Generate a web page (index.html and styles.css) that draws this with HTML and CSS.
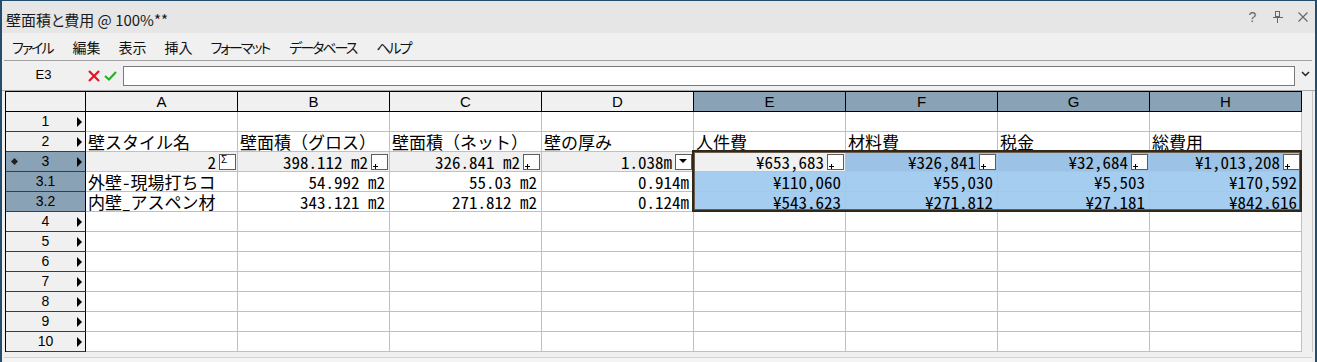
FILE: index.html
```html
<!DOCTYPE html>
<html lang="ja">
<head>
    <meta charset="UTF-8">
    <title>壁面積と費用 @ 100%**</title>
    <link rel="stylesheet" href="styles.css">
</head>
<body>
<div class="window">
    <!-- タイトルバー -->
    <div class="titlebar">
        <span class="title">壁面積と費用 @ 100%**</span>
        <div class="title-buttons">
            <span class="tbtn">?</span>
            <span class="tbtn">
                <svg width="11" height="12" viewBox="0 0 11 12"><path d="M3.5 0.5h4v5h-4zM0.5 6.5h10M5.5 6.5v5" fill="none" stroke="#666" stroke-width="1" shape-rendering="crispEdges"/></svg>
            </span>
            <span class="tbtn">
                <svg width="10" height="10" viewBox="0 0 10 10"><path d="M0.5 0.5l9 9M9.5 0.5l-9 9" stroke="#666" stroke-width="1.1"/></svg>
            </span>
        </div>
    </div>

    <!-- メニュー -->
    <div class="menubar">
        <span class="menu-item kana">ファイル</span>
        <span class="menu-item">編集</span>
        <span class="menu-item">表示</span>
        <span class="menu-item">挿入</span>
        <span class="menu-item kana">フォーマット</span>
        <span class="menu-item kana">データベース</span>
        <span class="menu-item kana">ヘルプ</span>
    </div>
    <div class="separator"></div>

    <!-- 数式バー -->
    <div class="formulabar">
        <span class="cellref">E3</span>
        <svg class="cancel" width="12" height="12" viewBox="0 0 12 12"><path d="M1 1l10 10M11 1L1 11" stroke="#e81123" stroke-width="2.2"/></svg>
        <svg class="ok" width="13" height="10" viewBox="0 0 13 10"><path d="M1 5l4 3.5L12 1" fill="none" stroke="#22b022" stroke-width="2"/></svg>
        <div class="formula-input"></div>
        <span class="chev">
            <svg width="9" height="6" viewBox="0 0 9 6"><path d="M1 1l3.5 3.5L8 1" fill="none" stroke="#222" stroke-width="1.5"/></svg>
        </span>
    </div>

    <!-- シート -->
    <div class="sheet-area">
        <div class="pane">
            <div class="sheet">
                <div class="corner"></div>
                <div class="ch">A</div>
                <div class="ch">B</div>
                <div class="ch">C</div>
                <div class="ch">D</div>
                <div class="ch sel">E</div>
                <div class="ch sel">F</div>
                <div class="ch sel">G</div>
                <div class="ch sel">H</div>

                <!-- 1 -->
                <div class="rh"><span class="mark"></span><span class="num">1</span><span class="arrow"></span></div>
                <div class="c"></div><div class="c"></div><div class="c"></div><div class="c"></div>
                <div class="c"></div><div class="c"></div><div class="c"></div><div class="c"></div>

                <!-- 2 -->
                <div class="rh"><span class="mark"></span><span class="num">2</span><span class="arrow"></span></div>
                <div class="c l">壁スタイル名</div>
                <div class="c l">壁面積（グロス）</div>
                <div class="c l">壁面積（ネット）</div>
                <div class="c l">壁の厚み</div>
                <div class="c l">人件費</div>
                <div class="c l">材料費</div>
                <div class="c l">税金</div>
                <div class="c l">総費用</div>

                <!-- 3 -->
                <div class="rh sel"><span class="mark"><i class="diamond"></i></span><span class="num">3</span><span class="arrow"></span></div>
                <div class="c r sum">2<span class="box sigma">Σ</span></div>
                <div class="c r sum">398.112 m2<span class="box"><svg width="15" height="14" viewBox="0 0 15 14"><path d="M1 11.5h5M3.5 9v5" stroke="#000" stroke-width="1" shape-rendering="crispEdges"/></svg></span></div>
                <div class="c r sum">326.841 m2<span class="box"><svg width="15" height="14" viewBox="0 0 15 14"><path d="M1 11.5h5M3.5 9v5" stroke="#000" stroke-width="1" shape-rendering="crispEdges"/></svg></span></div>
                <div class="c r sum">1.038m<span class="box"><svg width="15" height="14" viewBox="0 0 15 14"><path d="M3 4h8l-4 4z" fill="#000"/></svg></span></div>
                <div class="c r sum">¥653,683<span class="box"><svg width="15" height="14" viewBox="0 0 15 14"><path d="M1 11.5h5M3.5 9v5" stroke="#000" stroke-width="1" shape-rendering="crispEdges"/></svg></span></div>
                <div class="c r hl-top">¥326,841<span class="box"><svg width="15" height="14" viewBox="0 0 15 14"><path d="M1 11.5h5M3.5 9v5" stroke="#000" stroke-width="1" shape-rendering="crispEdges"/></svg></span></div>
                <div class="c r hl-top">¥32,684<span class="box"><svg width="15" height="14" viewBox="0 0 15 14"><path d="M1 11.5h5M3.5 9v5" stroke="#000" stroke-width="1" shape-rendering="crispEdges"/></svg></span></div>
                <div class="c r hl-top">¥1,013,208<span class="box"><svg width="15" height="14" viewBox="0 0 15 14"><path d="M1 11.5h5M3.5 9v5" stroke="#000" stroke-width="1" shape-rendering="crispEdges"/></svg></span></div>

                <!-- 3.1 -->
                <div class="rh sel"><span class="mark"></span><span class="num">3.1</span><span></span></div>
                <div class="c l">外壁-現場打ちコ</div>
                <div class="c r">54.992 m2</div>
                <div class="c r">55.03 m2</div>
                <div class="c r">0.914m</div>
                <div class="c r hl">¥110,060</div>
                <div class="c r hl">¥55,030</div>
                <div class="c r hl">¥5,503</div>
                <div class="c r hl">¥170,592</div>

                <!-- 3.2 -->
                <div class="rh sel"><span class="mark"></span><span class="num">3.2</span><span></span></div>
                <div class="c l">内壁_アスペン材</div>
                <div class="c r">343.121 m2</div>
                <div class="c r">271.812 m2</div>
                <div class="c r">0.124m</div>
                <div class="c r hl">¥543,623</div>
                <div class="c r hl">¥271,812</div>
                <div class="c r hl">¥27,181</div>
                <div class="c r hl">¥842,616</div>

                <!-- 4 - 10 -->
                <div class="rh"><span class="mark"></span><span class="num">4</span><span class="arrow"></span></div>
                <div class="c"></div><div class="c"></div><div class="c"></div><div class="c"></div>
                <div class="c"></div><div class="c"></div><div class="c"></div><div class="c"></div>
                <div class="rh"><span class="mark"></span><span class="num">5</span><span class="arrow"></span></div>
                <div class="c"></div><div class="c"></div><div class="c"></div><div class="c"></div>
                <div class="c"></div><div class="c"></div><div class="c"></div><div class="c"></div>
                <div class="rh"><span class="mark"></span><span class="num">6</span><span class="arrow"></span></div>
                <div class="c"></div><div class="c"></div><div class="c"></div><div class="c"></div>
                <div class="c"></div><div class="c"></div><div class="c"></div><div class="c"></div>
                <div class="rh"><span class="mark"></span><span class="num">7</span><span class="arrow"></span></div>
                <div class="c"></div><div class="c"></div><div class="c"></div><div class="c"></div>
                <div class="c"></div><div class="c"></div><div class="c"></div><div class="c"></div>
                <div class="rh"><span class="mark"></span><span class="num">8</span><span class="arrow"></span></div>
                <div class="c"></div><div class="c"></div><div class="c"></div><div class="c"></div>
                <div class="c"></div><div class="c"></div><div class="c"></div><div class="c"></div>
                <div class="rh"><span class="mark"></span><span class="num">9</span><span class="arrow"></span></div>
                <div class="c"></div><div class="c"></div><div class="c"></div><div class="c"></div>
                <div class="c"></div><div class="c"></div><div class="c"></div><div class="c"></div>
                <div class="rh"><span class="mark"></span><span class="num">10</span><span class="arrow"></span></div>
                <div class="c"></div><div class="c"></div><div class="c"></div><div class="c"></div>
                <div class="c"></div><div class="c"></div><div class="c"></div><div class="c"></div>

                <!-- 選択範囲 E3:H3.2 -->
                <div class="selection"></div>
            </div>
            <div class="vscroll"></div>
        </div>
        <div class="hbar"></div>
    </div>
</div>
</body>
</html>
```

FILE: styles.css
```css
* {
    box-sizing: border-box;
}

body {
    margin: 0;
    background-color: #234d6e;
    font-family: "Noto Sans CJK JP", sans-serif;
    color: #000;
}

.window {
    width: 1317px;
    height: 362px;
    border-top: 1px solid #234d6e;
    border-left: 2px solid #234d6e;
    border-right: 2px solid #234d6e;
    background-color: #f0f0f0;
    overflow: hidden;
    display: flex;
    flex-direction: column;
}

/* タイトルバー */
.titlebar {
    height: 32px;
    flex: none;
    background-color: #e6e6e6;
    display: flex;
    align-items: center;
    padding: 4px 0 0 4px;
}

.title {
    flex: 1;
    font-size: 15px;
    color: #1a1a1a;
    font-feature-settings: "palt";
}

.title-buttons {
    display: flex;
    align-items: center;
    margin-top: -4px;
}

.tbtn {
    width: 25px;
    display: flex;
    justify-content: center;
    align-items: center;
    font-family: "Liberation Sans", sans-serif;
    font-size: 14px;
    color: #666;
}

/* メニュー */
.menubar {
    height: 27px;
    flex: none;
    display: flex;
    align-items: center;
    padding-left: 1px;
}

.menu-item {
    padding: 0 9px;
    font-size: 14px;
    color: #111;
}

.menu-item.kana {
    font-feature-settings: "palt";
    letter-spacing: -2px;
    padding-right: 11px;
}

.separator {
    height: 1px;
    flex: none;
    margin: 0 3px 0 2px;
    background-color: #a0a0a0;
}

/* 数式バー */
.formulabar {
    height: 29px;
    flex: none;
    display: flex;
    align-items: center;
}

.cellref {
    width: 83px;
    text-align: center;
    font-family: "Liberation Sans", sans-serif;
    font-size: 13px;
    margin-top: -3px;
}

.cancel {
    margin-left: 3px;
}

.ok {
    margin-left: 4px;
}

.formula-input {
    flex: 1;
    height: 20px;
    margin-left: 6px;
    background-color: #fff;
    border: 1px solid #7a7a7a;
}

.chev {
    width: 20px;
    display: flex;
    justify-content: center;
    margin-top: -4px;
}

/* シート */
.sheet-area {
    flex: 1;
    border-top: 1px solid #a8a8a8;
    display: flex;
    flex-direction: column;
}

.pane {
    display: flex;
    padding-left: 3px;
}

.sheet {
    position: relative;
    display: grid;
    grid-template-columns: 80px repeat(8, 152px);
    grid-auto-rows: 20px;
    border-left: 1px solid #000;
    border-top: 1px solid #000;
    background-color: #fff;
    font-family: "Noto Sans Mono CJK JP", "Noto Sans CJK JP", monospace;
}

.vscroll {
    flex: 1;
    margin-right: 2px;
    border-right: 1px solid #c8c8c8;
}

.hbar {
    margin: 5px 3px 0 2px;
    border-top: 1px solid #d4d4d4;
    height: 6px;
    background-color: #f4f4f4;
}

.corner,
.ch {
    background-color: #f0f0f0;
    border-right: 1px solid #000;
    border-bottom: 1px solid #000;
}

.ch {
    text-align: center;
    font-family: "Liberation Sans", sans-serif;
    font-size: 15px;
    line-height: 19px;
}

.ch.sel {
    background-color: #8aa2b6;
}

/* 行見出し */
.rh {
    display: grid;
    grid-template-columns: 12px 1fr 12px;
    align-items: center;
    background-color: #f0f0f0;
    border-right: 1px solid #000;
    border-bottom: 1px solid #3c3c3c;
    font-family: "Liberation Sans", sans-serif;
    font-size: 14px;
    line-height: 19px;
}

.rh.sel {
    background-color: #8aa2b6;
}

.rh .num {
    text-align: center;
}

.rh .mark {
    display: flex;
    justify-content: flex-end;
}

.rh .arrow {
    justify-self: end;
    margin-right: 3px;
    width: 0;
    height: 0;
    border-top: 5px solid transparent;
    border-bottom: 5px solid transparent;
    border-left: 5px solid #000;
}

.diamond {
    width: 5px;
    height: 5px;
    background-color: #222;
    transform: rotate(45deg);
    margin-right: 1px;
}

/* セル */
.c {
    display: flex;
    align-items: center;
    border-right: 1px solid #c0c0c0;
    border-bottom: 1px solid #c0c0c0;
    font-size: 17px;
    line-height: 19px;
    white-space: nowrap;
}

.c.l {
    padding-left: 2px;
}

.c.r {
    justify-content: flex-end;
    padding-right: 4px;
}

.c.sum {
    background-color: #f0f0f0;
    padding-right: 1px;
}

.c.hl-top {
    background-color: #9cc3e5;
    padding-right: 1px;
}

.c.hl {
    background-color: #a5cdf0;
}

.box {
    width: 17px;
    height: 16px;
    margin-left: 3px;
    flex: none;
    display: flex;
    border: 1px solid #5c5c5c;
    background-color: #fff;
}

.box.sigma {
    font-family: "Liberation Sans", sans-serif;
    font-size: 10px;
    line-height: 10px;
    padding-left: 1px;
}

.selection {
    position: absolute;
    left: 686px;
    top: 58px;
    width: 610px;
    height: 62px;
    border: 2px solid #30271d;
    box-shadow: inset 0 0 0 1px #6a5d4e;
    pointer-events: none;
}
```
